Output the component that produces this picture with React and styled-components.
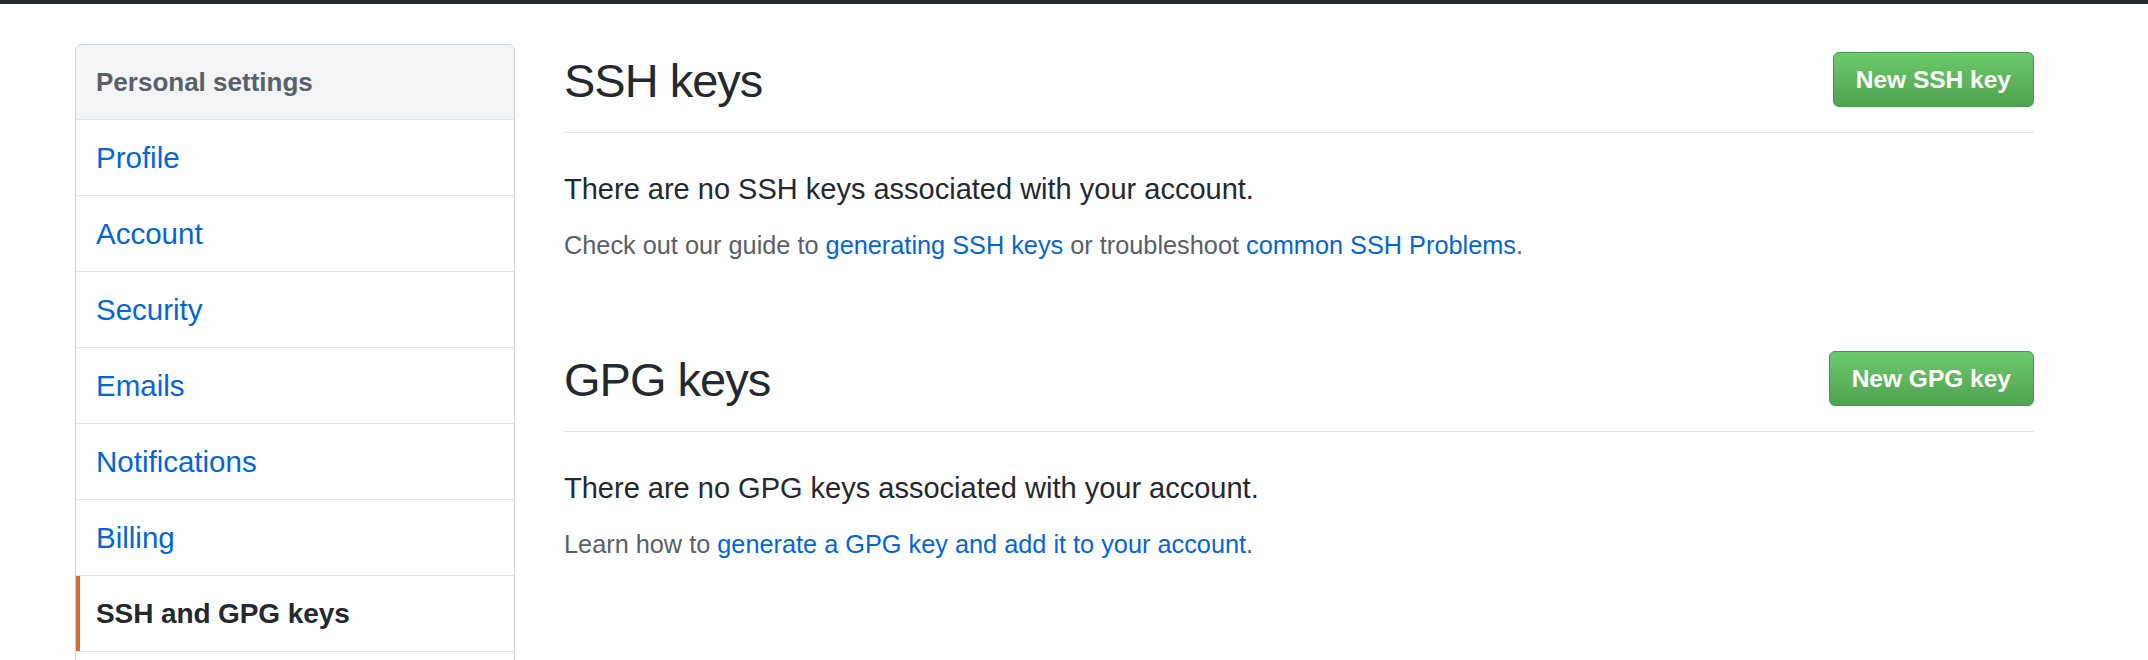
import React from "react";
import styled, { createGlobalStyle, css } from "styled-components";

const GlobalStyle = createGlobalStyle`
  html, body { margin: 0; padding: 0; background: #ffffff; }
  body { font-family: "Liberation Sans", Arial, Helvetica, sans-serif; color: #24292e; }
  * { box-sizing: border-box; }
`;

const TopBar = styled.div`
  height: 4px;
  background: #24292e;
`;

const Layout = styled.div`
  display: flex;
  align-items: flex-start;
  gap: 49px;
  padding: 40px 114px 0 75px;
`;

const Sidebar = styled.nav`
  width: 440px;
  min-height: 660px;
  flex-shrink: 0;
  border: 1px solid #d1d5da;
  border-radius: 6px;
  overflow: hidden;
`;

const MenuHeading = styled.div`
  height: 75px;
  display: flex;
  align-items: center;
  padding: 0 20px;
  background: #f3f4f6;
  border-bottom: 1px solid #e1e4e8;
  color: #586069;
  font-size: 26px;
  font-weight: 700;
`;

const MenuItem = styled.a`
  position: relative;
  height: 76px;
  display: flex;
  align-items: center;
  padding: 0 20px;
  border-bottom: 1px solid #e1e4e8;
  color: #0366d6;
  font-size: 29.5px;
  text-decoration: none;
  ${(p) =>
    p.$selected &&
    css`
      color: #24292e;
      font-size: 28px;
      font-weight: 700;
      letter-spacing: -0.1px;
      &::before {
        content: "";
        position: absolute;
        left: 0;
        top: 0;
        bottom: 0;
        width: 4px;
        background: #d6692d;
      }
    `}
`;

const Main = styled.main`
  flex: 1;
  min-width: 0;
`;

const Section = styled.section`
  & + & {
    margin-top: 79px;
  }
`;

const Subhead = styled.div`
  display: flex;
  align-items: center;
  justify-content: space-between;
  height: 89px;
  padding: 8px 0 25px;
  border-bottom: 1px solid #e1e4e8;
`;

const Heading = styled.h2`
  margin: 0;
  padding-top: 3px;
  font-size: 47px;
  font-weight: 400;
  letter-spacing: -1px;
  line-height: 52px;
  color: #24292e;
`;

const PrimaryButton = styled.button`
  height: 55px;
  padding: 0 22px;
  border: 1px solid #4a954a;
  border-radius: 6px;
  background: linear-gradient(180deg, #6cca6c 0%, #4fa34f 100%);
  color: #ffffff;
  font-family: inherit;
  font-size: 24.5px;
  font-weight: 700;
  cursor: pointer;
`;

const Lead = styled.p`
  margin: 35px 0 0;
  font-size: 29px;
  line-height: 1.5;
  color: #24292e;
`;

const Note = styled.p`
  margin: 15px 0 0;
  font-size: 25.3px;
  line-height: 1.5;
  color: #586069;
`;

const Link = styled.a`
  color: #0366d6;
  text-decoration: none;
`;

const menu = ["Profile", "Account", "Security", "Emails", "Notifications", "Billing", "SSH and GPG keys"];

export default function App() {
  return (
    <>
      <GlobalStyle />
      <TopBar />
      <Layout>
        <Sidebar>
          <MenuHeading>Personal settings</MenuHeading>
          {menu.map((m) => (
            <MenuItem key={m} href="#" $selected={m === "SSH and GPG keys"}>
              {m}
            </MenuItem>
          ))}
        </Sidebar>
        <Main>
          <Section>
            <Subhead>
              <Heading>SSH keys</Heading>
              <PrimaryButton>New SSH key</PrimaryButton>
            </Subhead>
            <Lead>There are no SSH keys associated with your account.</Lead>
            <Note>
              Check out our guide to <Link href="#">generating SSH keys</Link> or troubleshoot{" "}
              <Link href="#">common SSH Problems</Link>.
            </Note>
          </Section>
          <Section>
            <Subhead>
              <Heading>GPG keys</Heading>
              <PrimaryButton>New GPG key</PrimaryButton>
            </Subhead>
            <Lead>There are no GPG keys associated with your account.</Lead>
            <Note>
              Learn how to <Link href="#">generate a GPG key and add it to your account</Link>.
            </Note>
          </Section>
        </Main>
      </Layout>
    </>
  );
}
